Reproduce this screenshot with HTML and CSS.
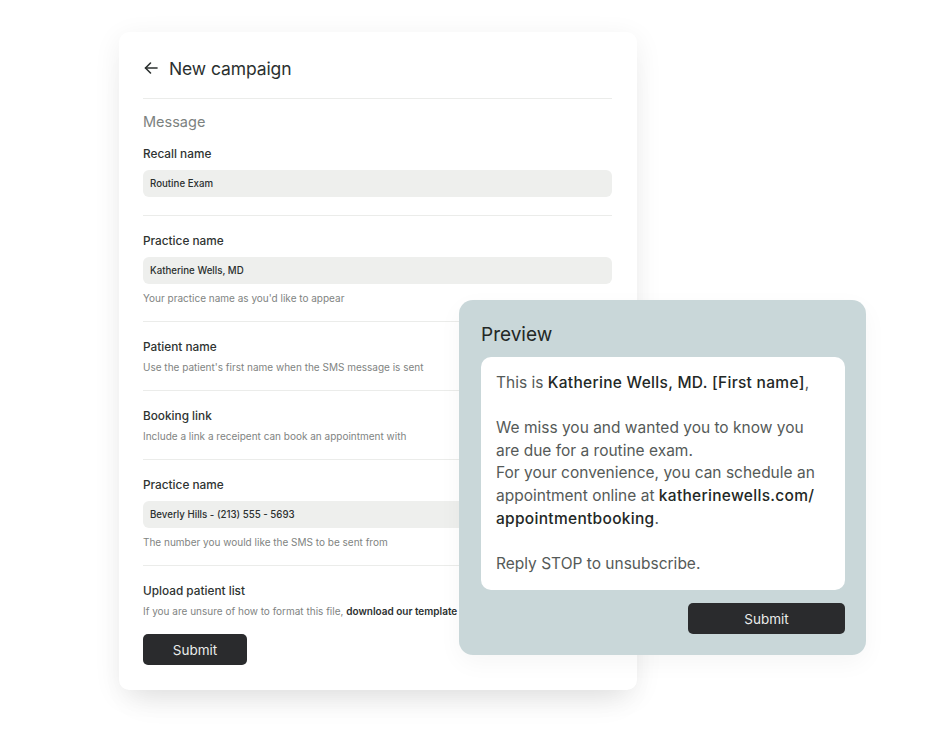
FILE: index.html
```html
<!DOCTYPE html>
<html lang="en">
<head>
  <meta charset="UTF-8">
  <meta name="viewport" content="width=device-width, initial-scale=1.0">
  <title>New campaign</title>
  <link rel="stylesheet" href="styles.css">
</head>
<body>
  <div class="stage">
    <div class="campaign-card">
      <div class="card-header">
        <svg class="back-icon" width="16" height="16" viewBox="0 0 16 16" fill="none" stroke="#2b302f" stroke-width="1.6" stroke-linecap="round" stroke-linejoin="round">
          <path d="M14 8H2.5"/>
          <path d="M7.5 3L2.5 8l5 5"/>
        </svg>
        <h1>New campaign</h1>
      </div>

      <div class="section first">
        <p class="section-title">Message</p>
        <label class="field-label">Recall name</label>
        <div class="field-input">Routine Exam</div>
      </div>

      <div class="section">
        <label class="field-label">Practice name</label>
        <div class="field-input">Katherine Wells, MD</div>
        <p class="hint">Your practice name as you'd like to appear</p>
      </div>

      <div class="section">
        <label class="field-label">Patient name</label>
        <p class="hint tight">Use the patient's first name when the SMS message is sent</p>
      </div>

      <div class="section">
        <label class="field-label">Booking link</label>
        <p class="hint tight">Include a link a receipent can book an appointment with</p>
      </div>

      <div class="section">
        <label class="field-label">Practice name</label>
        <div class="field-input">Beverly Hills - (213) 555 - 5693</div>
        <p class="hint">The number you would like the SMS to be sent from</p>
      </div>

      <div class="section last">
        <label class="field-label">Upload patient list</label>
        <p class="hint tight">If you are unsure of how to format this file, <strong>download our template</strong></p>
        <button class="btn btn-small">Submit</button>
      </div>
    </div>

    <div class="preview-panel">
      <h2>Preview</h2>
      <div class="preview-message">
        <p>This is <strong>Katherine Wells, MD. [First name]</strong>,</p>
        <p class="blank">&nbsp;</p>
        <p>We miss you and wanted you to know you are due for a routine exam.</p>
        <p>For your convenience, you can schedule an appointment online at <strong>katherinewells.com/<br>appointmentbooking</strong>.</p>
        <p class="blank">&nbsp;</p>
        <p>Reply STOP to unsubscribe.</p>
      </div>
      <div class="preview-actions">
        <button class="btn btn-wide">Submit</button>
      </div>
    </div>
  </div>
</body>
</html>
```

FILE: styles.css
```css
* {
  margin: 0;
  padding: 0;
  box-sizing: border-box;
  font-family: 'Inter', 'Liberation Sans', sans-serif;
}

body {
  background: #fff;
  color: #2b302f;
  width: 936px;
  height: 738px;
  overflow: hidden;
}

.stage {
  position: relative;
  padding: 32px 0 0 119px;
}

.campaign-card {
  width: 518px;
  background: #fff;
  border-radius: 10px;
  padding: 24px 25px 25px 24px;
  box-shadow: 0 6px 28px rgba(0, 0, 0, 0.07), 0 22px 30px -14px rgba(0, 0, 0, 0.08);
}

.card-header {
  display: flex;
  align-items: center;
  gap: 10px;
  height: 24px;
  margin-bottom: 18px;
}

.back-icon {
  flex: none;
}

h1 {
  font-size: 17.5px;
  font-weight: 400;
  letter-spacing: -0.1px;
  color: #2b302f;
}

.section {
  border-top: 1px solid #ebecea;
  padding: 17px 0 16px;
}

.section.first {
  padding-top: 13px;
  padding-bottom: 18px;
}

.section.last {
  padding-bottom: 0;
}

.section-title {
  font-size: 14.5px;
  line-height: 20px;
  color: #7c8280;
  margin-bottom: 14px;
}

.field-label {
  display: block;
  font-size: 11.8px;
  line-height: 16px;
  font-weight: 500;
  color: #2e3331;
}

.field-input {
  margin-top: 8px;
  height: 27px;
  background: #eeefed;
  border-radius: 6px;
  padding: 0 7px;
  display: flex;
  align-items: center;
  font-size: 9.7px;
  font-weight: 500;
  color: #2b302f;
}

.hint {
  margin-top: 7px;
  font-size: 10px;
  line-height: 14px;
  color: #7f8482;
}

.hint.tight {
  margin-top: 5px;
}

.hint strong {
  font-weight: 600;
  color: #2b302f;
}

.btn {
  display: flex;
  align-items: center;
  justify-content: center;
  background: #2a2b2d;
  color: #e9ecea;
  border: none;
  border-radius: 5px;
  font-size: 13.5px;
  font-weight: 400;
  height: 31px;
  cursor: pointer;
}

.btn-small {
  width: 104px;
  margin-top: 16px;
}

.preview-panel {
  position: absolute;
  left: 459px;
  top: 300px;
  width: 407px;
  height: 355px;
  background: #c9d7d9;
  border-radius: 14px;
  padding: 23px 21px 21px 22px;
  box-shadow: 0 8px 24px rgba(0, 0, 0, 0.04);
}

h2 {
  font-size: 19px;
  line-height: 24px;
  font-weight: 400;
  color: #232826;
  margin-bottom: 10px;
}

.preview-message {
  background: #fff;
  border-radius: 10px;
  height: 233px;
  padding: 15px 15px;
  font-size: 15.5px;
  line-height: 22.6px;
  color: #555a58;
}

.preview-message strong {
  font-weight: 500;
  letter-spacing: 0.3px;
  color: #232826;
}

.preview-actions {
  display: flex;
  justify-content: flex-end;
  margin-top: 13px;
}

.btn-wide {
  width: 157px;
}
```
